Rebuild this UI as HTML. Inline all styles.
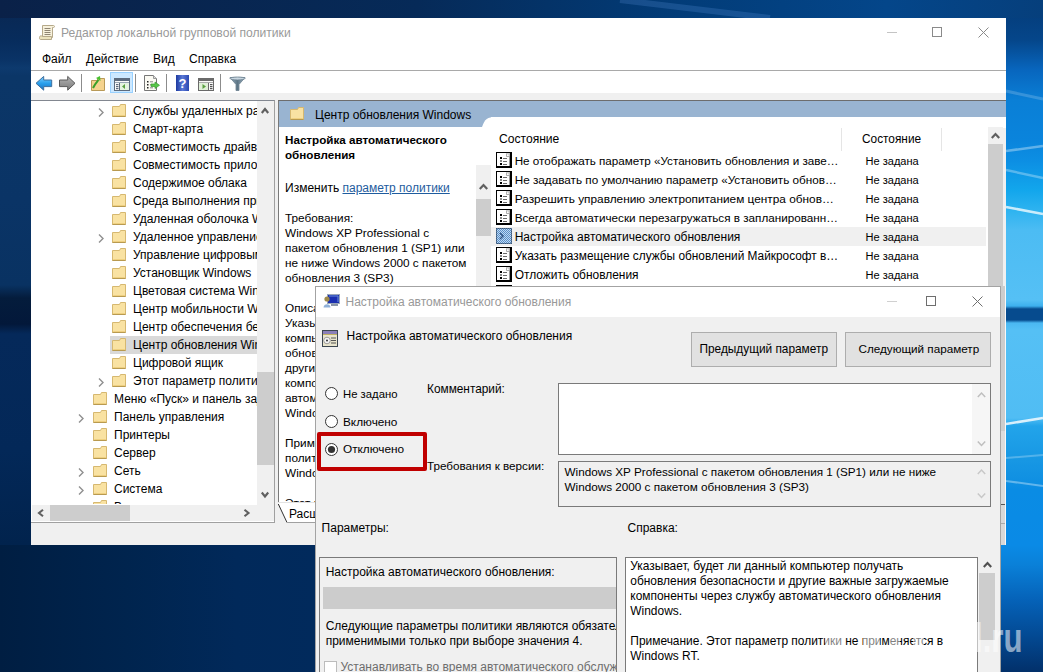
<!DOCTYPE html><html><head><meta charset="utf-8"><style>
*{margin:0;padding:0;box-sizing:border-box}
html,body{width:1043px;height:672px;overflow:hidden}
body{position:relative;font-family:"Liberation Sans",sans-serif;font-size:12px;color:#000;background:#012550}
.a{position:absolute}
.t{position:absolute;white-space:nowrap}
svg{position:absolute;overflow:visible}
.clip{position:absolute;overflow:hidden}
</style></head><body>
<div class="a" style="left:0;top:0;width:1043px;height:672px;background:linear-gradient(180deg,#0a2650 0,#072c5c 40px,#0a3366 60px,#0d3a6e 68px,#0b3667 76px,#0a3466 200px,#093262 285px,#041c3c 298px,#03183a 324px,#05295a 334px,#032858 450px,#01234d 545px,#00214a 672px)"></div>
<div class="a" style="left:1001px;top:0;width:42px;height:672px;background:linear-gradient(180deg,#043a76 0,#05468a 40px,#0866be 70px,#0a7fd6 100px,#0a84dc 140px,#0c8ee3 160px,#12a6ec 190px,#30b4f0 212px,#4cbcf3 230px,#55c0f5 300px,#3db0ee 306px,#064b8e 309px,#064b8e 320px,#4ab8f2 323px,#55c0f5 330px,#50bdf4 418px,#22a4ea 426px,#1898e4 458px,#1090e2 480px,#0a8ce4 490px,#0a8ae6 545px,#0a80d8 565px,#0562b8 600px,#034a94 635px,#02306a 672px)"></div>
<svg style="left:1006px;top:0" width="37" height="672"><path d="M0 91L37 99" stroke="rgba(255,255,255,.18)" stroke-width="3"/><path d="M0 151L37 146" stroke="rgba(255,255,255,.35)" stroke-width="2.5"/><path d="M0 170L37 178" stroke="rgba(255,255,255,.3)" stroke-width="2.5"/><path d="M0 207L37 214" stroke="rgba(255,255,255,.75)" stroke-width="2.5"/><path d="M0 424L37 418" stroke="rgba(255,255,255,.8)" stroke-width="2.5"/><path d="M0 458L37 455" stroke="rgba(255,255,255,.25)" stroke-width="2"/><path d="M0 481L37 486" stroke="rgba(255,255,255,.35)" stroke-width="2"/></svg>
<div class="a" style="left:0;top:0;width:1043px;height:18px;background:linear-gradient(90deg,#0a2148 0,#062a58 40%,#023c78 65%,#04468a 85%,#063f7c 100%)"></div>
<svg style="left:600px;top:0" width="443" height="18"><path d="M20 0L170 18" stroke="rgba(120,180,255,.18)" stroke-width="6"/></svg>
<div class="a" style="left:0;top:545px;width:315px;height:127px;background:linear-gradient(90deg,#001e42 0,#00244e 40%,#01295a 75%,#012a5c 100%)"></div>
<div class="a" style="left:31px;top:18px;width:975px;height:527px;background:#fff"></div>
<svg style="left:38px;top:24px" width="18" height="17"><path d="M4.5 1.5H15.5C16.8 1.5 16.8 3.5 15.5 3.5H14.5V13.5H4.5Z" fill="#f7f1dc" stroke="#b5a98a"/><path d="M6.5 4.5H12.5M6.5 6.5H12.5M6.5 8.5H12.5M6.5 10.5H12.5" stroke="#8f8572" stroke-width="1"/><path d="M1.5 13.5C1.5 11.5 3.5 11.5 4.5 12.5H13.5V15.5H2.5C1.5 15.5 1.5 14.5 1.5 13.5Z" fill="#ece3bd" stroke="#b5a98a"/></svg>
<div class="t" style="left:61px;top:26px;font-size:12.1px;line-height:15px;color:#999">Редактор локальной групповой политики</div>
<div class="a" style="left:887px;top:32px;width:10px;height:1px;background:#c4c4c4"></div>
<div class="a" style="left:932px;top:27px;width:10px;height:10px;border:1px solid #8a8a8a"></div>
<svg style="left:978px;top:27px" width="11" height="11"><path d="M0.5 0.5L10.5 10.5M10.5 0.5L0.5 10.5" stroke="#8a8a8a" stroke-width="1"/></svg>
<div class="t" style="left:42px;top:52px;font-size:12px;line-height:15px;">Файл</div>
<div class="t" style="left:86px;top:52px;font-size:12px;line-height:15px;">Действие</div>
<div class="t" style="left:153px;top:52px;font-size:12px;line-height:15px;">Вид</div>
<div class="t" style="left:189px;top:52px;font-size:12px;line-height:15px;">Справка</div>
<div class="a" style="left:31px;top:70px;width:975px;height:1px;background:#a9a9a9"></div>
<div class="a" style="left:31px;top:93px;width:975px;height:7px;background:#f0f0f0"></div>
<svg style="left:35px;top:75px" width="18" height="16"><defs><linearGradient id="gb" x1="0" y1="0" x2="0" y2="1"><stop offset="0" stop-color="#7fd0ff"/><stop offset=".5" stop-color="#2aa0ec"/><stop offset="1" stop-color="#1b70c0"/></linearGradient></defs><path d="M1 8.3L8.7 1.4V5H16.7V11.6H8.7V15.2Z" fill="url(#gb)" stroke="#3d6f9e" stroke-width="1"/></svg>
<svg style="left:58px;top:75px" width="18" height="16"><defs><linearGradient id="gg" x1="0" y1="0" x2="0" y2="1"><stop offset="0" stop-color="#b4b4b4"/><stop offset="1" stop-color="#7a7a7a"/></linearGradient></defs><path d="M17 8.3L9.7 1.4V5H1.5V11.6H9.7V15.2Z" fill="url(#gg)" stroke="#5a5a5a" stroke-width="1"/></svg>
<div class="a" style="left:81px;top:74px;width:1px;height:18px;background:#8c8c8c"></div>
<div class="a" style="left:135px;top:74px;width:1px;height:18px;background:#8c8c8c"></div>
<div class="a" style="left:166px;top:74px;width:1px;height:18px;background:#8c8c8c"></div>
<div class="a" style="left:220px;top:74px;width:1px;height:18px;background:#8c8c8c"></div>
<svg style="left:90px;top:75px" width="17" height="17"><path d="M1.5 5.5H7L8 3.5H14.5V15.5H1.5Z" fill="#f5d38e" stroke="#b99a58"/><path d="M3 13C5 9 7 7 8.5 5" fill="none" stroke="#3aa028" stroke-width="2"/><path d="M6 3L10 1L10.5 6Z" fill="#48c030"/></svg>
<div class="a" style="left:110px;top:72px;width:23px;height:21px;background:#cce8ff;border:1px solid #99d1ff"></div>
<svg style="left:114px;top:78px" width="16" height="13"><rect x="0.5" y="0.5" width="15" height="12" fill="#fafafa" stroke="#5d6b7d"/><rect x="1" y="1" width="14" height="2" fill="#5d6b7d"/><rect x="1" y="4" width="14" height="1" fill="#9aa6b4"/><path d="M5.5 5V12.5" stroke="#5d6b7d"/><rect x="2" y="6" width="2.5" height="1.2" fill="#5d6b7d"/><rect x="2" y="8" width="2.5" height="1.2" fill="#5d6b7d"/><rect x="2" y="10" width="2.5" height="1.2" fill="#5d6b7d"/><rect x="6" y="5" width="9" height="7" fill="#e6f4e0"/><path d="M8 8.5L11 6V11Z" fill="#5aa040"/></svg>
<svg style="left:143px;top:74px" width="18" height="17"><path d="M1.5 1.5H10.5L13.5 4.5V16.5H1.5Z" fill="#fbfaf3" stroke="#777"/><path d="M10.5 1.5V4.5H13.5" fill="#ddd" stroke="#999"/><rect x="4" y="7" width="1.5" height="1.5" fill="#222"/><rect x="4" y="10" width="1.5" height="1.5" fill="#222"/><rect x="4" y="13" width="1.5" height="1.5" fill="#222"/><path d="M7 7.8H10M7 10.8H10M7 13.8H10" stroke="#888"/><path d="M8 10H12V8L16.5 11.3L12 14.5V12.5H8Z" fill="#58c848" stroke="#3a9a30" stroke-width=".7"/></svg>
<svg style="left:176px;top:75px" width="13" height="16"><defs><linearGradient id="gh" x1="0" y1="0" x2="1" y2="0"><stop offset="0" stop-color="#1d3aa0"/><stop offset=".5" stop-color="#5a78d6"/><stop offset="1" stop-color="#2a48b0"/></linearGradient></defs><rect x="0" y="0" width="13" height="16" fill="url(#gh)"/><text x="6.5" y="12.5" font-family="Liberation Sans" font-weight="bold" font-size="13" fill="#fff" text-anchor="middle">?</text></svg>
<svg style="left:198px;top:78px" width="16" height="13"><rect x="0.5" y="0.5" width="15" height="12" fill="#fafafa" stroke="#6a6a6a"/><rect x="1" y="1" width="14" height="2" fill="#6a6a6a"/><rect x="1" y="4" width="14" height="1" fill="#aaa"/><path d="M10.5 5V12.5" stroke="#6a6a6a"/><rect x="1" y="5" width="9" height="7" fill="#e0f0d8"/><path d="M4.5 6L8 8.5L4.5 11Z" fill="#5aa040"/><rect x="12" y="6" width="2.5" height="1.2" fill="#555"/><rect x="12" y="8" width="2.5" height="1.2" fill="#555"/><rect x="12" y="10" width="2.5" height="1.2" fill="#555"/></svg>
<svg style="left:229px;top:76px" width="17" height="16"><defs><linearGradient id="gf" x1="0" y1="0" x2="1" y2="0"><stop offset="0" stop-color="#9ab0c0"/><stop offset=".5" stop-color="#5d7585"/><stop offset="1" stop-color="#a8bccb"/></linearGradient></defs><path d="M1 1.5H16L10 8.5V14.5H7V8.5Z" fill="url(#gf)" stroke="#6a7f8e" stroke-width=".8"/><ellipse cx="8.5" cy="2.5" rx="7.5" ry="1.5" fill="#c8d6e0" stroke="#6a7f8e" stroke-width=".8"/></svg>
<div class="a" style="left:31px;top:521px;width:975px;height:24px;background:#f0f0f0"></div>
<div class="a" style="left:275px;top:100px;width:4px;height:423px;background:#f0f0f0"></div>
<div class="a" style="left:31px;top:100px;width:244px;height:423px;background:#fff;border-top:1px solid #828790;border-right:1px solid #a0a0a0;border-bottom:1px solid #a0a0a0"></div>
<div class="clip" style="left:31px;top:101px;width:226px;height:403px">
<svg style="left:67px;top:7px" width="6" height="9"><path d="M1 0.5L5 4.5L1 8.5" fill="none" stroke="#8f8f8f" stroke-width="1.4"/></svg>
<svg style="left:81px;top:3px" width="14" height="13"><path d="M0.5 2.5H7.5L8.5 0.5H13.5V12.5H0.5Z" fill="#f9e2a2" stroke="#d6b870"/><path d="M1.2 11.5H12.8" stroke="#efd080"/><path d="M0.5 12.5H13.5" stroke="#b89a50"/></svg>
<div class="t" style="left:102px;top:3px;font-size:12px;line-height:15px;">Службы удаленных рабочих столов</div>
<svg style="left:81px;top:21px" width="14" height="13"><path d="M0.5 2.5H7.5L8.5 0.5H13.5V12.5H0.5Z" fill="#f9e2a2" stroke="#d6b870"/><path d="M1.2 11.5H12.8" stroke="#efd080"/><path d="M0.5 12.5H13.5" stroke="#b89a50"/></svg>
<div class="t" style="left:102px;top:21px;font-size:12px;line-height:15px;">Смарт-карта</div>
<svg style="left:81px;top:39px" width="14" height="13"><path d="M0.5 2.5H7.5L8.5 0.5H13.5V12.5H0.5Z" fill="#f9e2a2" stroke="#d6b870"/><path d="M1.2 11.5H12.8" stroke="#efd080"/><path d="M0.5 12.5H13.5" stroke="#b89a50"/></svg>
<div class="t" style="left:102px;top:39px;font-size:12px;line-height:15px;">Совместимость драйверов устройств</div>
<svg style="left:81px;top:57px" width="14" height="13"><path d="M0.5 2.5H7.5L8.5 0.5H13.5V12.5H0.5Z" fill="#f9e2a2" stroke="#d6b870"/><path d="M1.2 11.5H12.8" stroke="#efd080"/><path d="M0.5 12.5H13.5" stroke="#b89a50"/></svg>
<div class="t" style="left:102px;top:57px;font-size:12px;line-height:15px;">Совместимость приложений</div>
<svg style="left:81px;top:75px" width="14" height="13"><path d="M0.5 2.5H7.5L8.5 0.5H13.5V12.5H0.5Z" fill="#f9e2a2" stroke="#d6b870"/><path d="M1.2 11.5H12.8" stroke="#efd080"/><path d="M0.5 12.5H13.5" stroke="#b89a50"/></svg>
<div class="t" style="left:102px;top:75px;font-size:12px;line-height:15px;">Содержимое облака</div>
<svg style="left:81px;top:93px" width="14" height="13"><path d="M0.5 2.5H7.5L8.5 0.5H13.5V12.5H0.5Z" fill="#f9e2a2" stroke="#d6b870"/><path d="M1.2 11.5H12.8" stroke="#efd080"/><path d="M0.5 12.5H13.5" stroke="#b89a50"/></svg>
<div class="t" style="left:102px;top:93px;font-size:12px;line-height:15px;">Среда выполнения приложений</div>
<svg style="left:81px;top:111px" width="14" height="13"><path d="M0.5 2.5H7.5L8.5 0.5H13.5V12.5H0.5Z" fill="#f9e2a2" stroke="#d6b870"/><path d="M1.2 11.5H12.8" stroke="#efd080"/><path d="M0.5 12.5H13.5" stroke="#b89a50"/></svg>
<div class="t" style="left:102px;top:111px;font-size:12px;line-height:15px;">Удаленная оболочка Windows</div>
<svg style="left:67px;top:133px" width="6" height="9"><path d="M1 0.5L5 4.5L1 8.5" fill="none" stroke="#8f8f8f" stroke-width="1.4"/></svg>
<svg style="left:81px;top:129px" width="14" height="13"><path d="M0.5 2.5H7.5L8.5 0.5H13.5V12.5H0.5Z" fill="#f9e2a2" stroke="#d6b870"/><path d="M1.2 11.5H12.8" stroke="#efd080"/><path d="M0.5 12.5H13.5" stroke="#b89a50"/></svg>
<div class="t" style="left:102px;top:129px;font-size:12px;line-height:15px;">Удаленное управление Windows</div>
<svg style="left:81px;top:147px" width="14" height="13"><path d="M0.5 2.5H7.5L8.5 0.5H13.5V12.5H0.5Z" fill="#f9e2a2" stroke="#d6b870"/><path d="M1.2 11.5H12.8" stroke="#efd080"/><path d="M0.5 12.5H13.5" stroke="#b89a50"/></svg>
<div class="t" style="left:102px;top:147px;font-size:12px;line-height:15px;">Управление цифровыми правами</div>
<svg style="left:81px;top:165px" width="14" height="13"><path d="M0.5 2.5H7.5L8.5 0.5H13.5V12.5H0.5Z" fill="#f9e2a2" stroke="#d6b870"/><path d="M1.2 11.5H12.8" stroke="#efd080"/><path d="M0.5 12.5H13.5" stroke="#b89a50"/></svg>
<div class="t" style="left:102px;top:165px;font-size:12px;line-height:15px;">Установщик Windows</div>
<svg style="left:81px;top:183px" width="14" height="13"><path d="M0.5 2.5H7.5L8.5 0.5H13.5V12.5H0.5Z" fill="#f9e2a2" stroke="#d6b870"/><path d="M1.2 11.5H12.8" stroke="#efd080"/><path d="M0.5 12.5H13.5" stroke="#b89a50"/></svg>
<div class="t" style="left:102px;top:183px;font-size:12px;line-height:15px;">Цветовая система Windows</div>
<svg style="left:81px;top:201px" width="14" height="13"><path d="M0.5 2.5H7.5L8.5 0.5H13.5V12.5H0.5Z" fill="#f9e2a2" stroke="#d6b870"/><path d="M1.2 11.5H12.8" stroke="#efd080"/><path d="M0.5 12.5H13.5" stroke="#b89a50"/></svg>
<div class="t" style="left:102px;top:201px;font-size:12px;line-height:15px;">Центр мобильности Windows</div>
<svg style="left:81px;top:219px" width="14" height="13"><path d="M0.5 2.5H7.5L8.5 0.5H13.5V12.5H0.5Z" fill="#f9e2a2" stroke="#d6b870"/><path d="M1.2 11.5H12.8" stroke="#efd080"/><path d="M0.5 12.5H13.5" stroke="#b89a50"/></svg>
<div class="t" style="left:102px;top:219px;font-size:12px;line-height:15px;">Центр обеспечения безопасности</div>
<div class="a" style="left:79px;top:235px;width:300px;height:18px;background:#d9d9d9"></div>
<svg style="left:81px;top:237px" width="14" height="13"><path d="M0.5 2.5H7.5L8.5 0.5H13.5V12.5H0.5Z" fill="#f9e2a2" stroke="#d6b870"/><path d="M1.2 11.5H12.8" stroke="#efd080"/><path d="M0.5 12.5H13.5" stroke="#b89a50"/></svg>
<div class="t" style="left:102px;top:237px;font-size:12px;line-height:15px;">Центр обновления Windows</div>
<svg style="left:81px;top:255px" width="14" height="13"><path d="M0.5 2.5H7.5L8.5 0.5H13.5V12.5H0.5Z" fill="#f9e2a2" stroke="#d6b870"/><path d="M1.2 11.5H12.8" stroke="#efd080"/><path d="M0.5 12.5H13.5" stroke="#b89a50"/></svg>
<div class="t" style="left:102px;top:255px;font-size:12px;line-height:15px;">Цифровой ящик</div>
<svg style="left:67px;top:277px" width="6" height="9"><path d="M1 0.5L5 4.5L1 8.5" fill="none" stroke="#8f8f8f" stroke-width="1.4"/></svg>
<svg style="left:81px;top:273px" width="14" height="13"><path d="M0.5 2.5H7.5L8.5 0.5H13.5V12.5H0.5Z" fill="#f9e2a2" stroke="#d6b870"/><path d="M1.2 11.5H12.8" stroke="#efd080"/><path d="M0.5 12.5H13.5" stroke="#b89a50"/></svg>
<div class="t" style="left:102px;top:273px;font-size:12px;line-height:15px;">Этот параметр политики</div>
<svg style="left:62px;top:291px" width="14" height="13"><path d="M0.5 2.5H7.5L8.5 0.5H13.5V12.5H0.5Z" fill="#f9e2a2" stroke="#d6b870"/><path d="M1.2 11.5H12.8" stroke="#efd080"/><path d="M0.5 12.5H13.5" stroke="#b89a50"/></svg>
<div class="t" style="left:83px;top:291px;font-size:12px;line-height:15px;">Меню «Пуск» и панель задач</div>
<svg style="left:47px;top:313px" width="6" height="9"><path d="M1 0.5L5 4.5L1 8.5" fill="none" stroke="#8f8f8f" stroke-width="1.4"/></svg>
<svg style="left:62px;top:309px" width="14" height="13"><path d="M0.5 2.5H7.5L8.5 0.5H13.5V12.5H0.5Z" fill="#f9e2a2" stroke="#d6b870"/><path d="M1.2 11.5H12.8" stroke="#efd080"/><path d="M0.5 12.5H13.5" stroke="#b89a50"/></svg>
<div class="t" style="left:83px;top:309px;font-size:12px;line-height:15px;">Панель управления</div>
<svg style="left:62px;top:327px" width="14" height="13"><path d="M0.5 2.5H7.5L8.5 0.5H13.5V12.5H0.5Z" fill="#f9e2a2" stroke="#d6b870"/><path d="M1.2 11.5H12.8" stroke="#efd080"/><path d="M0.5 12.5H13.5" stroke="#b89a50"/></svg>
<div class="t" style="left:83px;top:327px;font-size:12px;line-height:15px;">Принтеры</div>
<svg style="left:62px;top:345px" width="14" height="13"><path d="M0.5 2.5H7.5L8.5 0.5H13.5V12.5H0.5Z" fill="#f9e2a2" stroke="#d6b870"/><path d="M1.2 11.5H12.8" stroke="#efd080"/><path d="M0.5 12.5H13.5" stroke="#b89a50"/></svg>
<div class="t" style="left:83px;top:345px;font-size:12px;line-height:15px;">Сервер</div>
<svg style="left:47px;top:367px" width="6" height="9"><path d="M1 0.5L5 4.5L1 8.5" fill="none" stroke="#8f8f8f" stroke-width="1.4"/></svg>
<svg style="left:62px;top:363px" width="14" height="13"><path d="M0.5 2.5H7.5L8.5 0.5H13.5V12.5H0.5Z" fill="#f9e2a2" stroke="#d6b870"/><path d="M1.2 11.5H12.8" stroke="#efd080"/><path d="M0.5 12.5H13.5" stroke="#b89a50"/></svg>
<div class="t" style="left:83px;top:363px;font-size:12px;line-height:15px;">Сеть</div>
<svg style="left:47px;top:385px" width="6" height="9"><path d="M1 0.5L5 4.5L1 8.5" fill="none" stroke="#8f8f8f" stroke-width="1.4"/></svg>
<svg style="left:62px;top:381px" width="14" height="13"><path d="M0.5 2.5H7.5L8.5 0.5H13.5V12.5H0.5Z" fill="#f9e2a2" stroke="#d6b870"/><path d="M1.2 11.5H12.8" stroke="#efd080"/><path d="M0.5 12.5H13.5" stroke="#b89a50"/></svg>
<div class="t" style="left:83px;top:381px;font-size:12px;line-height:15px;">Система</div>
<svg style="left:62px;top:399px" width="14" height="13"><path d="M0.5 2.5H7.5L8.5 0.5H13.5V12.5H0.5Z" fill="#f9e2a2" stroke="#d6b870"/><path d="M1.2 11.5H12.8" stroke="#efd080"/><path d="M0.5 12.5H13.5" stroke="#b89a50"/></svg>
<div class="t" style="left:83px;top:399px;font-size:12px;line-height:15px;">Все параметры</div>
</div>
<div class="a" style="left:257px;top:101px;width:17px;height:404px;background:#f0f0f0"></div>
<div class="a" style="left:257px;top:372px;width:17px;height:93px;background:#cdcdcd"></div>
<svg style="left:261px;top:108px" width="8" height="5"><path d="M0.8 5L4.0 1L7.2 5" fill="none" stroke="#606060" stroke-width="2.1"/></svg>
<svg style="left:261px;top:492px" width="8" height="5"><path d="M0.8 0.5L4.0 4.5L7.2 0.5" fill="none" stroke="#606060" stroke-width="2.1"/></svg>
<div class="a" style="left:32px;top:505px;width:242px;height:16px;background:#f0f0f0"></div>
<div class="a" style="left:50px;top:505px;width:80px;height:16px;background:#cdcdcd"></div>
<svg style="left:38px;top:509px" width="5" height="8"><path d="M5 0.8L1 4.0L5 7.2" fill="none" stroke="#606060" stroke-width="2.1"/></svg>
<svg style="left:244px;top:509px" width="5" height="8"><path d="M0.5 0.8L4.5 4.0L0.5 7.2" fill="none" stroke="#606060" stroke-width="2.1"/></svg>
<div class="a" style="left:278px;top:100px;width:728px;height:422px;background:#f0f0f0;border-top:1px solid #6d6d6d"></div>
<div class="a" style="left:278px;top:101px;width:2px;height:401px;background:#7a7a7a"></div>
<div class="a" style="left:279px;top:101px;width:727px;height:26px;background:#99b4d1"></div>
<svg style="left:290px;top:107px" width="14" height="13"><path d="M0.5 2.5H7.5L8.5 0.5H13.5V12.5H0.5Z" fill="#f9e2a2" stroke="#d6b870"/><path d="M1.2 11.5H12.8" stroke="#efd080"/><path d="M0.5 12.5H13.5" stroke="#b89a50"/></svg>
<div class="t" style="left:315px;top:108px;font-size:12px;line-height:15px;">Центр обновления Windows</div>
<svg style="left:476px;top:116px" width="530" height="12"><path d="M6 11 C9 3 11 1 20 1 H530 V12 H6Z" fill="#fff"/></svg>
<div class="a" style="left:491px;top:117px;width:512px;height:385px;background:#fff"></div>
<div class="a" style="left:279px;top:127px;width:212px;height:375px;background:#fff"></div>
<div class="clip" style="left:279px;top:127px;width:197px;height:375px">
<div class="t" style="left:6px;top:5px;font-size:11.65px;line-height:15px;font-weight:bold">Настройка автоматического</div>
<div class="t" style="left:6px;top:20px;font-size:11.65px;line-height:15px;font-weight:bold">обновления</div>
<div class="t" style="left:6px;top:54px;font-size:12px;line-height:15px;">Изменить <span style="color:#1f5c9e;text-decoration:underline">параметр политики</span></div>
<div class="t" style="left:6px;top:84px;font-size:11.8px;line-height:15px;">Требования:</div>
<div class="t" style="left:6px;top:99px;font-size:11.8px;line-height:15px;">Windows XP Professional с</div>
<div class="t" style="left:6px;top:114px;font-size:11.8px;line-height:15px;">пакетом обновления 1 (SP1) или</div>
<div class="t" style="left:6px;top:129px;font-size:11.8px;line-height:15px;">не ниже Windows 2000 с пакетом</div>
<div class="t" style="left:6px;top:144px;font-size:11.8px;line-height:15px;">обновления 3 (SP3)</div>
<div class="t" style="left:6px;top:174px;font-size:11.8px;line-height:15px;">Описание:</div>
<div class="t" style="left:6px;top:189px;font-size:11.8px;line-height:15px;">Указывает, будет ли данный</div>
<div class="t" style="left:6px;top:204px;font-size:11.8px;line-height:15px;">компьютер получать</div>
<div class="t" style="left:6px;top:219px;font-size:11.8px;line-height:15px;">обновления безопасности и</div>
<div class="t" style="left:6px;top:234px;font-size:11.8px;line-height:15px;">другие важные загружаемые</div>
<div class="t" style="left:6px;top:249px;font-size:11.8px;line-height:15px;">компоненты через службу</div>
<div class="t" style="left:6px;top:264px;font-size:11.8px;line-height:15px;">автоматического обновления</div>
<div class="t" style="left:6px;top:279px;font-size:11.8px;line-height:15px;">Windows.</div>
<div class="t" style="left:6px;top:309px;font-size:11.8px;line-height:15px;">Примечание. Этот параметр</div>
<div class="t" style="left:6px;top:324px;font-size:11.8px;line-height:15px;">политики не применяется в</div>
<div class="t" style="left:6px;top:339px;font-size:11.8px;line-height:15px;">Windows RT.</div>
<div class="t" style="left:6px;top:369px;font-size:11.8px;line-height:15px;">Этот параметр политики</div>
</div>
<div class="a" style="left:476px;top:165px;width:15px;height:337px;background:#f0f0f0"></div>
<div class="a" style="left:476px;top:199px;width:15px;height:37px;background:#cdcdcd"></div>
<svg style="left:479px;top:184px" width="9" height="5"><path d="M0.8 5L4.5 1L8.2 5" fill="none" stroke="#606060" stroke-width="2.2"/></svg>
<div class="t" style="left:499px;top:132px;font-size:12.1px;line-height:15px;">Состояние</div>
<div class="t" style="left:862px;top:132px;font-size:11.85px;line-height:15px;">Состояние</div>
<div class="a" style="left:841px;top:128px;width:1px;height:23px;background:#e5e5e5"></div>
<div class="a" style="left:941px;top:128px;width:1px;height:23px;background:#e5e5e5"></div>
<svg style="left:496px;top:152px" width="16" height="16"><rect x="0" y="0" width="16" height="16" fill="#000"/><rect x="1" y="1" width="12.6" height="13" fill="#fff"/><path d="M10 1L13.6 4.6V1Z" fill="#d0d0d0"/><path d="M10.5 1.5V4.5H13.5" fill="none" stroke="#999" stroke-width=".8"/><rect x="4" y="5" width="2" height="2" fill="#000"/><rect x="4" y="8" width="2" height="2" fill="#888"/><rect x="4" y="11" width="2" height="2" fill="#000"/><path d="M7 6.5H11M7 9.5H11M7 12.5H11" stroke="#6a6a6a" stroke-width="1"/></svg>
<div class="t" style="left:514.7px;top:153px;font-size:11.67px;line-height:15px;">Не отображать параметр «Установить обновления и заве…</div>
<div class="t" style="left:865.5px;top:154px;font-size:11.05px;line-height:15px;">Не задана</div>
<svg style="left:496px;top:171px" width="16" height="16"><rect x="0" y="0" width="16" height="16" fill="#000"/><rect x="1" y="1" width="12.6" height="13" fill="#fff"/><path d="M10 1L13.6 4.6V1Z" fill="#d0d0d0"/><path d="M10.5 1.5V4.5H13.5" fill="none" stroke="#999" stroke-width=".8"/><rect x="4" y="5" width="2" height="2" fill="#000"/><rect x="4" y="8" width="2" height="2" fill="#888"/><rect x="4" y="11" width="2" height="2" fill="#000"/><path d="M7 6.5H11M7 9.5H11M7 12.5H11" stroke="#6a6a6a" stroke-width="1"/></svg>
<div class="t" style="left:514.7px;top:172px;font-size:11.74px;line-height:15px;">Не задавать по умолчанию параметр «Установить обнов…</div>
<div class="t" style="left:865.5px;top:173px;font-size:11.05px;line-height:15px;">Не задана</div>
<svg style="left:496px;top:190px" width="16" height="16"><rect x="0" y="0" width="16" height="16" fill="#000"/><rect x="1" y="1" width="12.6" height="13" fill="#fff"/><path d="M10 1L13.6 4.6V1Z" fill="#d0d0d0"/><path d="M10.5 1.5V4.5H13.5" fill="none" stroke="#999" stroke-width=".8"/><rect x="4" y="5" width="2" height="2" fill="#000"/><rect x="4" y="8" width="2" height="2" fill="#888"/><rect x="4" y="11" width="2" height="2" fill="#000"/><path d="M7 6.5H11M7 9.5H11M7 12.5H11" stroke="#6a6a6a" stroke-width="1"/></svg>
<div class="t" style="left:514.7px;top:192px;font-size:11.83px;line-height:15px;">Разрешить управлению электропитанием центра обнов…</div>
<div class="t" style="left:865.5px;top:192px;font-size:11.05px;line-height:15px;">Не задана</div>
<svg style="left:496px;top:209px" width="16" height="16"><rect x="0" y="0" width="16" height="16" fill="#000"/><rect x="1" y="1" width="12.6" height="13" fill="#fff"/><path d="M10 1L13.6 4.6V1Z" fill="#d0d0d0"/><path d="M10.5 1.5V4.5H13.5" fill="none" stroke="#999" stroke-width=".8"/><rect x="4" y="5" width="2" height="2" fill="#000"/><rect x="4" y="8" width="2" height="2" fill="#888"/><rect x="4" y="11" width="2" height="2" fill="#000"/><path d="M7 6.5H11M7 9.5H11M7 12.5H11" stroke="#6a6a6a" stroke-width="1"/></svg>
<div class="t" style="left:514.7px;top:210px;font-size:11.7px;line-height:15px;">Всегда автоматически перезагружаться в запланированн…</div>
<div class="t" style="left:865.5px;top:211px;font-size:11.05px;line-height:15px;">Не задана</div>
<div class="a" style="left:491px;top:227px;width:495px;height:19px;background:#f0f0f0"></div>
<svg style="left:496px;top:228px" width="16" height="16"><defs><pattern id="dith" width="2" height="2" patternUnits="userSpaceOnUse"><rect width="2" height="2" fill="#bcdaf4"/><rect width="1" height="1" fill="#5b8dc6"/><rect x="1" y="1" width="1" height="1" fill="#5b8dc6"/></pattern></defs><rect x="0" y="0" width="16" height="16" fill="url(#dith)"/><rect x="0.5" y="0.5" width="15" height="15" fill="none" stroke="#0a1e3a" stroke-dasharray="1 1"/><path d="M4 5L7 8L4 11" stroke="#1d4070" stroke-width="1.4" fill="none" opacity=".8"/></svg>
<div class="t" style="left:514.7px;top:230px;font-size:12px;line-height:15px;">Настройка автоматического обновления</div>
<div class="t" style="left:865.5px;top:230px;font-size:11.05px;line-height:15px;">Не задана</div>
<svg style="left:496px;top:247px" width="16" height="16"><rect x="0" y="0" width="16" height="16" fill="#000"/><rect x="1" y="1" width="12.6" height="13" fill="#fff"/><path d="M10 1L13.6 4.6V1Z" fill="#d0d0d0"/><path d="M10.5 1.5V4.5H13.5" fill="none" stroke="#999" stroke-width=".8"/><rect x="4" y="5" width="2" height="2" fill="#000"/><rect x="4" y="8" width="2" height="2" fill="#888"/><rect x="4" y="11" width="2" height="2" fill="#000"/><path d="M7 6.5H11M7 9.5H11M7 12.5H11" stroke="#6a6a6a" stroke-width="1"/></svg>
<div class="t" style="left:514.7px;top:249px;font-size:11.86px;line-height:15px;">Указать размещение службы обновлений Майкрософт в…</div>
<div class="t" style="left:865.5px;top:249px;font-size:11.05px;line-height:15px;">Не задана</div>
<svg style="left:496px;top:266px" width="16" height="16"><rect x="0" y="0" width="16" height="16" fill="#000"/><rect x="1" y="1" width="12.6" height="13" fill="#fff"/><path d="M10 1L13.6 4.6V1Z" fill="#d0d0d0"/><path d="M10.5 1.5V4.5H13.5" fill="none" stroke="#999" stroke-width=".8"/><rect x="4" y="5" width="2" height="2" fill="#000"/><rect x="4" y="8" width="2" height="2" fill="#888"/><rect x="4" y="11" width="2" height="2" fill="#000"/><path d="M7 6.5H11M7 9.5H11M7 12.5H11" stroke="#6a6a6a" stroke-width="1"/></svg>
<div class="t" style="left:514.7px;top:268px;font-size:11.95px;line-height:15px;">Отложить обновления</div>
<div class="t" style="left:865.5px;top:268px;font-size:11.05px;line-height:15px;">Не задана</div>
<svg style="left:496px;top:285px" width="16" height="16"><rect x="0" y="0" width="16" height="16" fill="#000"/><rect x="1" y="1" width="12.6" height="13" fill="#fff"/><path d="M10 1L13.6 4.6V1Z" fill="#d0d0d0"/><path d="M10.5 1.5V4.5H13.5" fill="none" stroke="#999" stroke-width=".8"/><rect x="4" y="5" width="2" height="2" fill="#000"/><rect x="4" y="8" width="2" height="2" fill="#888"/><rect x="4" y="11" width="2" height="2" fill="#000"/><path d="M7 6.5H11M7 9.5H11M7 12.5H11" stroke="#6a6a6a" stroke-width="1"/></svg>
<div class="t" style="left:514.7px;top:287px;font-size:12px;line-height:15px;">Обновления</div>
<div class="t" style="left:865.5px;top:287px;font-size:11.05px;line-height:15px;">Не задана</div>
<div class="a" style="left:988px;top:127px;width:15px;height:375px;background:#f0f0f0"></div>
<div class="a" style="left:988px;top:144px;width:15px;height:287px;background:#cdcdcd"></div>
<svg style="left:991px;top:133px" width="9" height="5"><path d="M0.8 5L4.5 1L8.2 5" fill="none" stroke="#606060" stroke-width="2.2"/></svg>
<div class="a" style="left:278px;top:502px;width:728px;height:20px;background:#f0f0f0"></div>
<svg style="left:278px;top:502px" width="728" height="21"><path d="M0 0H120V20.5H9.2Z" fill="#fff"/><path d="M0 0.5H200" stroke="#e3e3e3"/><path d="M0.3 2L9 20.5" stroke="#333" stroke-width="1"/><path d="M9 20.5H728" stroke="#a0a0a0"/></svg>
<div class="t" style="left:289px;top:507px;font-size:12px;line-height:15px;">Расширенный</div>
<div class="a" style="left:1001px;top:286px;width:4px;height:145px;background:#cdcdcd"></div>
<div class="a" style="left:1001px;top:431px;width:4px;height:73px;background:#dcdcdc"></div>
<div class="a" style="left:1001px;top:504px;width:5px;height:1px;background:#555"></div>
<div class="a" style="left:1001px;top:505px;width:4px;height:40px;background:#d8d8d8"></div>
<div class="a" style="left:1001px;top:523px;width:5px;height:1px;background:#aaa"></div>
<div class="a" style="left:1005px;top:286px;width:1px;height:259px;background:#f8f8f8"></div>
<div class="a" style="left:315px;top:286px;width:686px;height:386px;background:#f0f0f0;border:1px solid #a3a3a3;border-bottom:0"></div>
<div class="a" style="left:316px;top:287px;width:684px;height:30px;background:#fff"></div>
<svg style="left:323px;top:293px" width="18" height="17"><rect x="4.5" y="1.5" width="12" height="9" fill="#1b2fb0" stroke="#9aa6b8"/><path d="M6 3H15V9" fill="none" stroke="#6b8fd8" stroke-width="1"/><rect x="8" y="11" width="7" height="2" fill="#8a96a8"/><circle cx="4" cy="6" r="2.6" fill="#a08a4a"/><path d="M0.5 14.5C0.5 10 7.5 10 7.5 14.5Z" fill="#8fb0d8"/></svg>
<div class="t" style="left:345.5px;top:295px;font-size:12px;line-height:15px;color:#999">Настройка автоматического обновления</div>
<div class="a" style="left:887px;top:301px;width:10px;height:1px;background:#d0d0d0"></div>
<div class="a" style="left:926px;top:296px;width:10px;height:10px;border:1px solid #6e6e6e"></div>
<svg style="left:972px;top:296px" width="11" height="11"><path d="M0.5 0.5L10.5 10.5M10.5 0.5L0.5 10.5" stroke="#6e6e6e" stroke-width="1"/></svg>
<svg style="left:322px;top:330px" width="17" height="17"><rect x="0.5" y="0.5" width="15" height="16" fill="#e8e4cc" stroke="#3c4650"/><rect x="1" y="1" width="14" height="3" fill="#8a7fb8"/><rect x="1" y="4" width="14" height="1" fill="#c0b060"/><circle cx="5" cy="10.5" r="3.3" fill="#f4f4f4" stroke="#888" stroke-width=".8"/><circle cx="5" cy="10.5" r="1" fill="#333"/><path d="M9 8H14M9 10.5H14M9 13H14" stroke="#555" stroke-width="1"/></svg>
<div class="t" style="left:346.5px;top:329px;font-size:12px;line-height:15px;">Настройка автоматического обновления</div>
<div class="a" style="left:691px;top:332px;width:146px;height:35px;background:#e1e1e1;border:1px solid #adadad"></div>
<div class="a" style="left:845px;top:332px;width:146px;height:35px;background:#e1e1e1;border:1px solid #adadad"></div>
<div class="t" style="left:699.5px;top:342px;font-size:11.85px;line-height:15px;">Предыдущий параметр</div>
<div class="t" style="left:858.5px;top:341px;font-size:11.7px;line-height:15px;">Следующий параметр</div>
<svg style="left:325px;top:386.9px" width="13" height="13"><circle cx="6.5" cy="6.5" r="6" fill="#fff" stroke="#333" stroke-width="1"/></svg>
<div class="t" style="left:343px;top:387px;font-size:11.3px;line-height:15px;">Не задано</div>
<svg style="left:325px;top:414.9px" width="13" height="13"><circle cx="6.5" cy="6.5" r="6" fill="#fff" stroke="#333" stroke-width="1"/></svg>
<div class="t" style="left:343px;top:415px;font-size:11.8px;line-height:15px;">Включено</div>
<svg style="left:325px;top:442.9px" width="13" height="13"><circle cx="6.5" cy="6.5" r="6" fill="#fff" stroke="#333" stroke-width="1"/><circle cx="6.5" cy="6.5" r="3.6" fill="#333"/></svg>
<div class="t" style="left:343px;top:442px;font-size:11.8px;line-height:15px;">Отключено</div>
<div class="a" style="left:317px;top:432px;width:110px;height:39px;border:4.5px solid #c00000;border-radius:2px"></div>
<div class="t" style="left:427px;top:382px;font-size:11.85px;line-height:15px;">Комментарий:</div>
<div class="t" style="left:427px;top:458px;font-size:11.7px;line-height:15px;">Требования к версии:</div>
<div class="a" style="left:558px;top:383px;width:433px;height:72px;background:#fff;border:1px solid #7a7a7a"></div>
<div class="a" style="left:972px;top:384px;width:18px;height:70px;background:#f6f6f6"></div>
<svg style="left:977px;top:392px" width="9" height="5"><path d="M0.8 5L4.5 1L8.2 5" fill="none" stroke="#bfbfbf" stroke-width="1.5"/></svg>
<svg style="left:977px;top:441px" width="9" height="5"><path d="M0.8 0.5L4.5 4.5L8.2 0.5" fill="none" stroke="#bfbfbf" stroke-width="1.5"/></svg>
<div class="a" style="left:558px;top:461px;width:433px;height:46px;background:#f0f0f0;border:1px solid #7a7a7a"></div>
<svg style="left:977px;top:469px" width="9" height="5"><path d="M0.8 5L4.5 1L8.2 5" fill="none" stroke="#c8c8c8" stroke-width="1.5"/></svg>
<svg style="left:977px;top:493px" width="9" height="5"><path d="M0.8 0.5L4.5 4.5L8.2 0.5" fill="none" stroke="#c8c8c8" stroke-width="1.5"/></svg>
<div class="t" style="left:564.5px;top:464px;font-size:11.73px;line-height:15px;">Windows XP Professional с пакетом обновления 1 (SP1) или не ниже</div>
<div class="t" style="left:564.5px;top:479px;font-size:11.73px;line-height:15px;">Windows 2000 с пакетом обновления 3 (SP3)</div>
<div class="t" style="left:321.6px;top:521px;font-size:12px;line-height:15px;">Параметры:</div>
<div class="t" style="left:627.5px;top:521px;font-size:12px;line-height:15px;">Справка:</div>
<div class="a" style="left:319px;top:557px;width:298px;height:115px;background:#f0f0f0;border:1px solid #7a7a7a;border-bottom:0"></div>
<div class="clip" style="left:320px;top:558px;width:296px;height:114px">
<div class="t" style="left:5.7px;top:7px;font-size:12px;line-height:15px;">Настройка автоматического обновления:</div>
<div class="a" style="left:3px;top:29px;width:300px;height:22px;background:#cccccc"></div>
<div class="t" style="left:5.7px;top:61px;font-size:12px;line-height:15px;">Следующие параметры политики являются обязательными и</div>
<div class="t" style="left:5.7px;top:76px;font-size:12px;line-height:15px;">применимыми только при выборе значения 4.</div>
<div class="a" style="left:3.5px;top:102.5px;width:13px;height:13px;border:1px solid #bcbcbc;background:#fff"></div>
<div class="t" style="left:20.5px;top:102px;font-size:12px;line-height:15px;color:#6d6d6d">Устанавливать во время автоматического обслуживания</div>
</div>
<div class="a" style="left:625px;top:557px;width:353px;height:115px;background:#fff;border:1px solid #7a7a7a;border-bottom:0"></div>
<div class="t" style="left:630.3px;top:559px;font-size:11.95px;line-height:15px;">Указывает, будет ли данный компьютер получать</div>
<div class="t" style="left:630.3px;top:574px;font-size:11.95px;line-height:15px;">обновления безопасности и другие важные загружаемые</div>
<div class="t" style="left:630.3px;top:589px;font-size:11.95px;line-height:15px;">компоненты через службу автоматического обновления</div>
<div class="t" style="left:630.3px;top:604px;font-size:11.95px;line-height:15px;">Windows.</div>
<div class="t" style="left:630.3px;top:634px;font-size:11.95px;line-height:15px;">Примечание. Этот параметр политики не применяется в</div>
<div class="t" style="left:630.3px;top:649px;font-size:11.95px;line-height:15px;">Windows RT.</div>
<div class="a" style="left:979px;top:557px;width:16px;height:115px;background:#f0f0f0"></div>
<div class="a" style="left:979px;top:573px;width:16px;height:67px;background:#cdcdcd"></div>
<svg style="left:983px;top:562px" width="9" height="5"><path d="M0.8 5L4.5 1L8.2 5" fill="none" stroke="#505050" stroke-width="2.1"/></svg>
<div class="t" style="left:974px;top:618px;font-size:40px;line-height:40px;font-weight:bold;color:rgba(255,255,255,.55);transform:scaleX(.78);transform-origin:0 0">l.ru</div>
<div class="a" style="left:825px;top:633px;width:18px;height:17px;background:rgba(255,255,255,.5)"></div>
<div class="a" style="left:863px;top:633px;width:17px;height:17px;background:rgba(255,255,255,.5)"></div>
<div class="a" style="left:890px;top:633px;width:10px;height:17px;background:rgba(255,255,255,.5)"></div>
<div class="a" style="left:913px;top:633px;width:11px;height:17px;background:rgba(255,255,255,.5)"></div>
</body></html>
